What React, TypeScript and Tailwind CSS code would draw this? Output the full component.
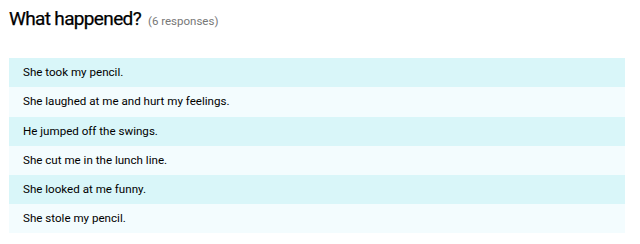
const answers = [
  "She took my pencil.",
  "She laughed at me and hurt my feelings.",
  "He jumped off the swings.",
  "She cut me in the lunch line.",
  "She looked at me funny.",
  "She stole my pencil.",
];

export default function App() {
  return (
    <div className="h-[244px] w-[640px] bg-white pl-[9px] pt-[8px] font-['Roboto',sans-serif]">
      <div className="flex items-baseline">
        <h1 className="text-[19px] leading-[22px] tracking-[-0.65px] text-black [-webkit-text-stroke:0.25px_black]">
          What happened?
        </h1>
        <span className="ml-[7px] text-[11.5px] text-[#777]">(6 responses)</span>
      </div>
      <ul className="mt-[28px] w-[616px]">
        {answers.map((a, i) => (
          <li
            key={i}
            className={
              "flex h-[29.2px] items-center pl-[14px] text-[11.6px] text-black " +
              (i % 2 === 0 ? "bg-[#d9f6f9]" : "bg-[#f3fcfe]")
            }
          >
            {a}
          </li>
        ))}
      </ul>
    </div>
  );
}
